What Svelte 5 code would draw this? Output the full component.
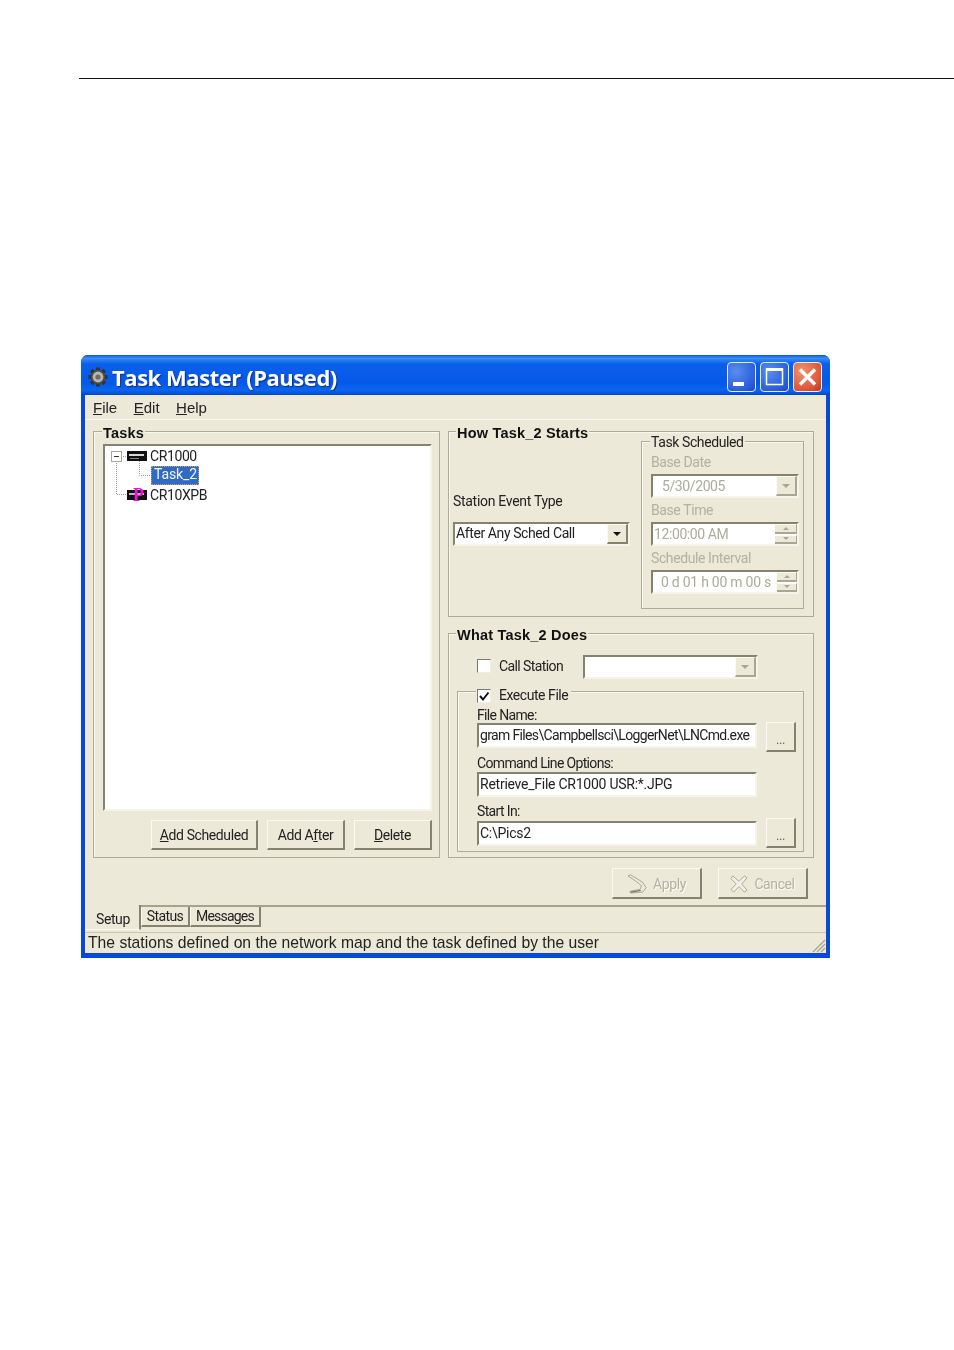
<script>
  const menus = [
    { key: 'F', rest: 'ile' },
    { key: 'E', rest: 'dit' },
    { key: 'H', rest: 'elp' }
  ];
  const gearTeeth = [0, 45, 90, 135];
</script>

<div class="page">
  <div class="rule"></div>

  <div class="window">
    <header class="titlebar">
      <svg class="app-icon" width="20" height="20" viewBox="0 0 20 20">
        {#each gearTeeth as a}
          <rect x="8" y="0.500" width="4" height="19" fill="#33332f" transform="rotate({a} 10 10)" />
        {/each}
        <circle cx="10" cy="10" r="7.200" fill="#4a4a46" />
        <circle cx="10" cy="10" r="5.400" fill="#b8b8ae" />
        <circle cx="10" cy="10" r="2.600" fill="#6d6d68" />
      </svg>
      <span class="title">Task Master (Paused)</span>
      <div class="caption-btns">
        <button class="cap">
          <svg width="29" height="30" viewBox="0 0 29 30"><rect x="6" y="20" width="11" height="4" fill="#fff" /></svg>
        </button>
        <button class="cap">
          <svg width="29" height="30" viewBox="0 0 29 30"><rect x="6.5" y="7" width="16" height="15.500" fill="none" stroke="#fff" stroke-width="1.500" /><rect x="6" y="6" width="17" height="3" fill="#fff" /></svg>
        </button>
        <button class="cap close">
          <svg width="29" height="30" viewBox="0 0 29 30"><path d="M7 7.500 L22 22.500 M22 7.500 L7 22.500" stroke="#fff" stroke-width="3.400" /></svg>
        </button>
      </div>
    </header>

    <div class="client">
      <nav class="menubar">
        {#each menus as m}
          <span class="menu"><u>{m.key}</u>{m.rest}</span>
        {/each}
      </nav>

      <main class="body">
        <section class="group tasks">
          <span class="legend bold tasks-legend">Tasks</span>
          <div class="tree">
            <svg class="tree-lines" width="50" height="60" viewBox="0 0 50 60">
              <path d="M11.500 15 V48.500 H23 M16 10.500 H23 M34.500 15 V29.500 H46" fill="none" stroke="#9b9b9b" stroke-dasharray="1 1" />
              <rect x="6.500" y="5.500" width="10" height="10" fill="#fff" stroke="#a9a793" />
              <path d="M9 10.500 H14" stroke="#333" />
            </svg>
            <div class="node">
              <svg class="device" width="20" height="10" viewBox="0 0 20 10">
                <rect x="0" y="0" width="20" height="10" fill="#111" />
                <rect x="2" y="3" width="15" height="2" fill="#d8d8d8" />
                <rect x="3" y="7" width="9" height="1" fill="#7a8a7a" />
              </svg>
              <span>CR1000</span>
            </div>
            <div class="node">
              <span class="selected">Task_2</span>
            </div>
            <div class="node">
              <svg class="device" width="20" height="10" viewBox="0 0 20 10">
                <rect x="0" y="0" width="20" height="10" fill="#111" />
                <rect x="2" y="3" width="15" height="2" fill="#bbb" />
              </svg>
              <span class="paused">P</span>
              <span>CR10XPB</span>
            </div>
          </div>
          <div class="task-actions">
            <button class="btn add-sched"><u>A</u>dd Scheduled</button>
            <button class="btn add-after">Add A<u>f</u>ter</button>
            <button class="btn del"><u>D</u>elete</button>
          </div>
        </section>

        <div class="right">
          <section class="group how">
            <span class="legend bold">How Task_2 Starts</span>
            <div class="event">
              <label class="event-label" for="event-type">Station Event Type</label>
              <div class="combo event-combo" id="event-type">
                <span class="value">After Any Sched Call</span>
                <span class="drop"><i class="arrow"></i></span>
              </div>
            </div>
            <section class="group sched">
              <span class="legend">Task Scheduled</span>
              <div class="lab off">Base Date</div>
              <div class="combo field-off">
                <span class="value indent">5/30/2005</span>
                <span class="drop off-drop"><i class="arrow"></i></span>
              </div>
              <div class="lab off">Base Time</div>
              <div class="combo field-off">
                <span class="value">12:00:00 AM</span>
                <span class="spin"><b><i class="arrow up"></i></b><b><i class="arrow"></i></b></span>
              </div>
              <div class="lab off">Schedule Interval</div>
              <div class="combo field-off">
                <span class="value indent2">0 d 01 h 00 m 00 s</span>
                <span class="spin narrow"><b><i class="arrow up"></i></b><b><i class="arrow"></i></b></span>
              </div>
            </section>
          </section>

          <section class="group what">
            <span class="legend bold">What Task_2 Does</span>
            <div class="call-row">
              <span class="check"></span>
              <span class="check-label">Call Station</span>
              <div class="combo call-combo">
                <span class="value"></span>
                <span class="drop off-drop"><i class="arrow"></i></span>
              </div>
            </div>
            <section class="group exec">
              <span class="legend exec-legend">
                <span class="check">
                  <svg width="12" height="12" viewBox="0 0 12 12"><path d="M2 6 L5 9.500 L10.500 2.500" fill="none" stroke="#111" stroke-width="2" /></svg>
                </span>
                <span class="check-label">Execute File</span>
              </span>
              <div class="exec-grid">
                <div class="lab">File Name:</div>
                <div class="input path">gram Files\Campbellsci\LoggerNet\LNCmd.exe</div>
                <button class="btn dots top">...</button>
                <div class="lab">Command Line Options:</div>
                <div class="input">Retrieve_File CR1000 USR:*.JPG</div>
                <span></span>
                <div class="lab">Start In:</div>
                <div class="input">C:\Pics2</div>
                <button class="btn dots bottom">...</button>
              </div>
            </section>
          </section>
        </div>
      </main>

      <div class="actions">
        <button class="btn action off">
          <svg width="22" height="20" viewBox="0 0 24 22">
            <path d="M1 2 L4 1 L17 9 L21 15 L17 20 L4 21 L3 19 L14 17 L16 13 L11 9 Z" fill="#ece9d8" stroke="#a3a194" />
            <path d="M4 20 L15 18" stroke="#77756a" stroke-width="1.500" />
          </svg>
          Apply
        </button>
        <button class="btn action off">
          <svg class="cancel-icon" width="18" height="18" viewBox="0 0 20 20">
            <path d="M3 1 L10 7 L16 1 L19 3 L13 10 L19 17 L16 19 L10 13 L4 19 L1 16 L7 10 L1 4 Z" fill="#f2f0e4" stroke="#a3a194" />
          </svg>
          Cancel
        </button>
      </div>

      <div class="tabs">
        <span class="tab active">Setup</span>
        <span class="tab status-tab">Status</span>
        <span class="tab messages-tab">Messages</span>
      </div>

      <footer class="status">
        <span>The stations defined on the network map and the task defined by the user</span>
        <svg class="grip" width="16" height="16" viewBox="0 0 16 16">
          <path d="M15 3 L3 15 M15 7 L7 15 M15 11 L11 15" stroke="#a9a793" stroke-width="1.300" />
        </svg>
      </footer>
    </div>
  </div>
</div>

<style>
  :global(body) {
    margin: 0;
    background: #fff;
  }

  .page {
    height: 1350px;
    padding-top: 78px;
    box-sizing: border-box;
    overflow: hidden;
  }

  .rule {
    height: 1px;
    margin-left: 79px;
    background: #111;
  }

  .window {
    width: 749px;
    margin: 276px 0 0 81px;
    border-radius: 7px 7px 0 0;
    overflow: hidden;
    font: 15px/1 "Liberation Sans", Arial, sans-serif;
    color: #222;
    background: #0a48d8;
    filter: blur(0.5px);
  }

  .titlebar {
    height: 40px;
    display: flex;
    align-items: center;
    padding: 3px 8px 0 7px;
    box-sizing: border-box;
    background: linear-gradient(180deg, #0a57d8 0%, #3a8df5 8%, #0a60ea 22%, #0658e8 70%, #0a66f0 88%, #0445c8 100%);
  }

  .app-icon {
    margin-right: 4px;
  }

  .title {
    font: 700 22px/1 "Open Sans", sans-serif;
    letter-spacing: -0.45px;
    color: #fff;
    text-shadow: 1px 1px 1px #0a2d90;
  }

  .caption-btns {
    display: flex;
    gap: 4px;
    margin-left: auto;
  }

  .cap {
    width: 29px;
    height: 30px;
    padding: 0;
    border: 1px solid #e6eefc;
    border-radius: 4px;
    background: radial-gradient(circle at 30% 30%, #5a8cf0, #2a5fdc 70%, #1c48c4);
  }

  .cap svg {
    display: block;
    margin: -1px;
  }

  .close {
    background: radial-gradient(circle at 30% 30%, #f0956e, #e0583a 65%, #c03416);
  }

  .client {
    margin: 0 4px 5px;
    background: #ece9d8;
  }

  .menubar {
    height: 24px;
    display: flex;
    align-items: center;
    gap: 16.500px;
    padding-left: 8px;
    border-bottom: 1px solid #f8f7f0;
  }

  .body {
    display: grid;
    grid-template-columns: 347px 366px;
    gap: 8px;
    padding: 11px 12px 0 8px;
    font: 14px/1 Roboto, sans-serif;
    letter-spacing: -0.4px;
  }

  .group {
    position: relative;
    box-sizing: border-box;
    border: 1px solid #aeac98;
    box-shadow: inset 1px 1px 0 #f8f7f0;
  }

  .legend {
    position: absolute;
    top: -6px;
    left: 7px;
    padding: 0 1px;
    background: #ece9d8;
    line-height: 15px;
    white-space: nowrap;
  }

  .tasks-legend {
    left: 8px;
  }

  .bold {
    font: 700 14.500px/15px "Liberation Sans", Arial, sans-serif;
    letter-spacing: 0.2px;
    color: #111;
  }

  .tasks {
    height: 427px;
    padding: 12px 7px 0 9px;
  }

  .tree {
    position: relative;
    height: 367px;
    box-sizing: border-box;
    padding: 0 0 0 45px;
    border: 2px solid;
    border-color: #85826f #f5f3ea #f5f3ea #85826f;
    background: #fff;
  }

  .tree-lines {
    position: absolute;
    top: 0;
    left: 0;
  }

  .node {
    position: relative;
    display: flex;
    align-items: center;
    height: 19.500px;
  }

  .device {
    position: absolute;
    left: -23px;
    top: 5px;
  }

  .selected {
    box-sizing: border-box;
    width: 48px;
    height: 19px;
    line-height: 17px;
    padding-left: 3px;
    background: #316ac5;
    color: #f2f5fb;
    letter-spacing: -0.1px;
    outline: 1px dotted #d9a441;
    outline-offset: -1px;
    margin-left: 1px;
  }

  .paused {
    position: absolute;
    left: -17px;
    top: 1px;
    font: 700 18px/1 "Liberation Serif", serif;
    color: #f010e0;
  }

  .task-actions {
    display: flex;
    justify-content: flex-end;
    gap: 9px;
    margin-top: 9px;
  }

  .btn {
    box-sizing: border-box;
    padding: 0;
    font: 14px/1 Roboto, sans-serif;
    letter-spacing: -0.4px;
    color: #222;
    background: #ece9d8;
    border: 2px solid;
    border-width: 1px 2px 2px 1px;
    border-color: #fbfaf5 #85826f #85826f #fbfaf5;
  }

  .add-sched {
    width: 107px;
    height: 30px;
  }

  .add-after,
  .del {
    width: 78px;
    height: 30px;
  }

  .right {
    display: flex;
    flex-direction: column;
    gap: 16px;
  }

  .how {
    height: 186px;
    display: flex;
    padding: 9px 9px 0 4px;
  }

  .event {
    width: 177px;
    padding-top: 53px;
    margin-right: 11px;
    flex: none;
  }

  .event-label {
    display: block;
    height: 28px;
    letter-spacing: -0.3px;
  }

  .combo {
    display: flex;
    align-items: center;
    box-sizing: border-box;
    border: 2px solid;
    border-color: #85826f #f5f3ea #f5f3ea #85826f;
    background: #fff;
  }

  .event-combo {
    height: 24px;
  }

  .event-combo .value {
    margin-top: -2px;
  }

  .value {
    flex: 1;
    padding-left: 1px;
    white-space: nowrap;
  }

  .drop {
    width: 21px;
    height: 20px;
    flex: none;
    display: flex;
    align-items: center;
    justify-content: center;
    box-sizing: border-box;
    background: #ece9d8;
    border: 1px solid;
    border-width: 1px 2px 2px 1px;
    border-color: #fbfaf5 #85826f #85826f #fbfaf5;
  }

  .off-drop {
    border-right-color: #a9a794;
    border-bottom-color: #a9a794;
  }

  .arrow {
    display: block;
    width: 0;
    height: 0;
    border-left: 4px solid transparent;
    border-right: 4px solid transparent;
    border-top: 4px solid #111;
  }

  .arrow.up {
    border-top: 0;
    border-bottom: 3px solid #a8a694;
  }

  .sched {
    width: 164px;
    height: 168px;
    padding: 13px 4px 0 9px;
  }

  .sched .arrow,
  .call-combo .arrow {
    border-top-color: #a8a694;
  }

  .spin .arrow {
    border-left-width: 3px;
    border-right-width: 3px;
    border-top-width: 3px;
  }

  .sched .legend {
    top: -7px;
    left: 8px;
    color: #222;
  }

  .lab {
    line-height: 16px;
  }

  .off {
    color: #b3b1a1;
  }

  .sched .lab {
    height: 19px;
    line-height: 14px;
  }

  .field-off {
    height: 24px;
    margin-bottom: 5px;
    color: #adab9b;
  }

  .indent {
    padding-left: 9px;
  }

  .indent2 {
    padding-left: 8px;
    letter-spacing: -0.25px;
  }

  .spin {
    display: flex;
    flex-direction: column;
    gap: 1px;
    width: 22px;
    flex: none;
    height: 20px;
    background: #fff;
  }

  .spin.narrow {
    width: 20px;
  }

  .spin b {
    flex: 1;
    display: flex;
    align-items: center;
    justify-content: center;
    background: #ece9d8;
    border-bottom: 2px solid #a9a794;
    border-right: 1px solid #a9a794;
    border-top: 1px solid #fbfaf5;
  }

  .what {
    height: 225px;
    padding: 21px 9px 0 8px;
  }

  .call-row {
    display: flex;
    align-items: center;
    height: 24px;
    padding-left: 20px;
  }

  .check {
    display: inline-flex;
    align-items: center;
    justify-content: center;
    box-sizing: border-box;
    width: 14px;
    height: 14px;
    border: 1px solid;
    border-color: #7c7a68 #f0eee2 #f0eee2 #7c7a68;
    background: #fff;
    flex: none;
  }

  .call-row .check {
    margin-top: -2px;
  }

  .check-label {
    margin-left: 8px;
    letter-spacing: -0.45px;
  }

  .call-row .check-label {
    width: 84px;
    margin-top: -2px;
    letter-spacing: -0.6px;
  }

  .call-combo {
    width: 175px;
    height: 24px;
  }

  .exec {
    height: 161px;
    margin-top: 12px;
    padding: 15px 7px 0 19px;
  }

  .exec-legend {
    left: 18px;
    display: flex;
    align-items: center;
    padding: 0 3px 0 1px;
    top: -4px;
  }

  .exec-grid {
    display: grid;
    grid-template-columns: 280px 30px;
    grid-template-rows: 16px 32px 17px 31px 18px 29px;
    column-gap: 9px;
    align-items: start;
  }

  .exec-grid .lab {
    grid-column: 1 / 3;
    line-height: 16px;
    letter-spacing: -0.65px;
  }

  .input {
    box-sizing: border-box;
    height: 25px;
    line-height: 20px;
    padding-left: 1px;
    overflow: hidden;
    white-space: nowrap;
    border: 2px solid;
    border-color: #85826f #f5f3ea #f5f3ea #85826f;
    background: #fff;
    letter-spacing: -0.25px;
  }

  .input.path {
    letter-spacing: -0.65px;
  }

  .dots {
    height: 30px;
    padding-top: 6px;
    font-size: 13px;
    color: #666;
  }

  .dots.top {
    margin-top: -1px;
  }

  .dots.bottom {
    margin-top: -3px;
  }

  .actions {
    display: flex;
    justify-content: flex-end;
    gap: 16px;
    padding: 10px 18px 0 0;
  }

  .action {
    width: 90px;
    height: 31px;
    padding-top: 2px;
    display: flex;
    align-items: center;
    justify-content: center;
    gap: 4px;
    color: #b3b1a1;
    text-shadow: 1px 1px 0 #fbfaf5;
  }

  .cancel-icon {
    margin-right: 2px;
  }

  .tabs {
    display: flex;
    align-items: flex-start;
    height: 27px;
    margin-top: 6px;
    border-top: 2px solid #a5a28e;
    box-sizing: border-box;
    font: 14px/1 Roboto, sans-serif;
    letter-spacing: -0.6px;
  }

  .tab {
    box-sizing: border-box;
    height: 20px;
    line-height: 18px;
    text-align: center;
    border: 1px solid;
    border-color: #85826f;
    border-left-color: #fbfaf5;
    border-width: 0 2px 2px 1px;
  }

  .status-tab {
    width: 49px;
  }

  .messages-tab {
    width: 71px;
    letter-spacing: -0.8px;
  }

  .tab.active {
    width: 56px;
    height: 25px;
    margin-top: -2px;
    padding: 7px 0 0 11px;
    line-height: 1;
    text-align: left;
    letter-spacing: -0.4px;
    background: #ece9d8;
    border-left: 0;
    border-bottom: 1px solid #fbfaf5;
  }

  .status {
    position: relative;
    height: 21px;
    box-sizing: border-box;
    padding-left: 3px;
    border-top: 1px solid #c9c6b2;
    font-size: 15.700px;
    line-height: 19px;
    color: #222;
  }

  .grip {
    position: absolute;
    right: 0;
    bottom: 0;
  }
</style>
